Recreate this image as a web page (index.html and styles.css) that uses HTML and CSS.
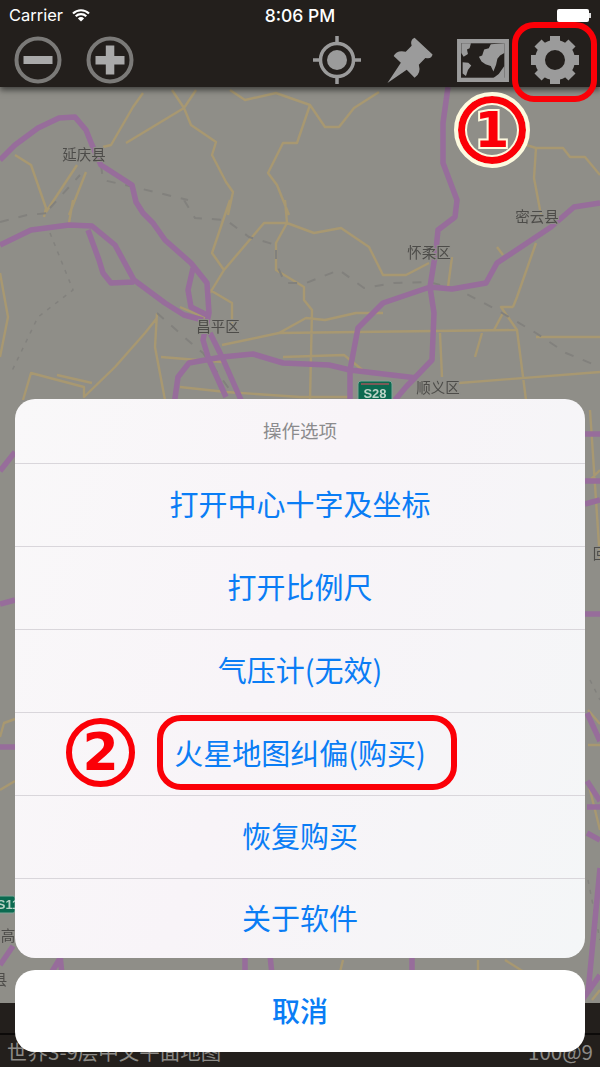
FILE: index.html
```html
<!DOCTYPE html>
<html lang="en">

<head>
    <meta charset="UTF-8" />
    <meta name="viewport" content="width=device-width, initial-scale=1.0" />
    <title>Map settings</title>
    <link rel="stylesheet" href="styles.css">
</head>

<body>
    <div class="screen">
        <div class="topbar">
            <div class="status-row">
                <div class="carrier">
                    <span>Carrier</span>
                    <svg class="wifi" width="18" height="14" viewBox="0 0 18 14">
                        <path d="M1 5.5 A11.5 11.5 0 0 1 17 5.5 M3.7 8.2 A7.7 7.7 0 0 1 14.3 8.2" fill="none" stroke="#fff" stroke-width="2.2" />
                        <path d="M5.9 10.4 A4.4 4.4 0 0 1 12.1 10.4 L9 13.6 Z" fill="#fff" />
                    </svg>
                </div>
                <div class="clock">8:06 PM</div>
                <div class="battery"><div class="battery-body"></div><div class="battery-nub"></div></div>
            </div>
            <div class="tool-row">
                <svg class="tool tool-zoom" width="48" height="48" viewBox="0 0 48 48">
                    <circle cx="24" cy="24" r="21.5" fill="none" stroke="#7b7a78" stroke-width="4" />
                    <rect x="9.5" y="20" width="29" height="8" fill="#a9a9a9" />
                </svg>
                <svg class="tool tool-zoom" width="48" height="48" viewBox="0 0 48 48">
                    <circle cx="24" cy="24" r="21.5" fill="none" stroke="#7b7a78" stroke-width="4" />
                    <rect x="9.5" y="20" width="29" height="8.5" fill="#a9a9a9" />
                    <rect x="19.8" y="9.5" width="8.5" height="29" fill="#a9a9a9" />
                </svg>
                <svg class="tool tool-target" width="50" height="50" viewBox="0 0 50 50">
                    <circle cx="25" cy="25" r="16.5" fill="none" stroke="#9b9b9b" stroke-width="3.5" />
                    <circle cx="25" cy="25" r="10" fill="#9b9b9b" />
                    <path d="M25 1 V9 M25 41 V49 M1 25 H9 M41 25 H49" stroke="#9b9b9b" stroke-width="3.5" />
                </svg>
                <svg class="tool tool-pin" width="48" height="49" viewBox="258 108 146 150">
                    <path d="M345 113 L400 165 Q397 180 378 175 L358 196 Q366 222 345 236 L321 211 L262 252 L303 190 L281 169 Q290 150 318 156 L336 138 Q330 120 345 113 Z" fill="#9b9b9b" />
                </svg>
                <svg class="tool tool-world" width="52" height="43" viewBox="470 118 157 130">
                    <rect x="470" y="118" width="157" height="130" fill="#9b9b9b" />
                    <rect x="482" y="131" width="131" height="104" fill="#231f1c" />
                    <path d="M483 131 H512 L508 146 L500 150 L503 163 L490 172 L483 160 Z M487 188 L504 190 L513 198 L503 212 L497 230 L487 222 Z M536 172 L546 168 L552 150 L566 146 L572 134 L613 131 V160 L600 168 L592 178 L588 196 L580 216 L572 200 L556 194 L544 186 Z M613 200 V236 H580 L596 224 Z" fill="#9b9b9b" />
                </svg>
                <svg class="tool tool-gear" width="50" height="50" viewBox="0 0 50 50">
                    <circle cx="25" cy="25" r="15" fill="none" stroke="#9b9b9b" stroke-width="10" />
                    <g fill="#9b9b9b">
                        <rect x="20" y="1" width="10" height="9" />
                        <rect x="20" y="1" width="10" height="9" transform="rotate(45 25 25)" />
                        <rect x="20" y="1" width="10" height="9" transform="rotate(90 25 25)" />
                        <rect x="20" y="1" width="10" height="9" transform="rotate(135 25 25)" />
                        <rect x="20" y="1" width="10" height="9" transform="rotate(180 25 25)" />
                        <rect x="20" y="1" width="10" height="9" transform="rotate(225 25 25)" />
                        <rect x="20" y="1" width="10" height="9" transform="rotate(270 25 25)" />
                        <rect x="20" y="1" width="10" height="9" transform="rotate(315 25 25)" />
                    </g>
                </svg>
            </div>
        </div>

        <svg class="map" width="600" height="916" viewBox="0 87 600 916">
            <path class="minor" d="M143 93 L133 107 L111 145 L103 147 M126 143 L184 108 L172 90 M184 108 L196 90 M184 108 L191 125 L216 142 L212 155 L226 182 L233 192 L228 215
                M230 90 L245 100 L276 93 L310 105 L325 127 L339 127 L354 108 L379 92 M310 105 L297 143 L283 143 L268 173 L277 185 L289 215
                M526 145 L536 148 L563 148 L570 157 L585 157 L600 175 M536 148 L534 178 L541 215
                M15 155 L31 165 L46 208 L44 217 M77 165 L46 212 M86 172 L69 215 M73 200 L69 223
                M230 200 L212 253 L224 270 L210 293 M224 270 L264 223 L287 223 L314 233 L341 228 L369 247 L383 275 L406 275 L429 263
                M285 200 L287 223 L276 243 L276 270 L304 287 L304 300 L312 310 L310 400
                M279 333 L517 330 L501 307 L513 307 M517 330 L526 400 M494 330 L503 313 M222 345 L279 333 L306 318 L325 320 L356 313 L383 313
                M210 290 L232 303 L232 330 M180 307 L210 320
                M157 313 L155 347 L165 400 M157 318 L145 333 L115 367 L84 397 L84 387 L31 373 L23 400 M57 375 L92 383
                M0 273 L8 317 L0 357 M161 357 L222 362 M283 357 L344 355 L365 372 M180 387 L226 392 L300 397 L350 397
                M459 383 L600 372 M475 357 L482 333 M440 333 L442 377 M536 337 L600 337
                M452 257 L448 287 M497 247 L503 255 M536 243 L517 297 L513 307
                M590 410 L600 560 M590 480 L600 470 M600 724 L588 710 M0 737 L4 723 L15 719 M0 790 L15 781 M588 782 L600 830 M588 745 H600
                M343 960 L340 972 M478 960 V972 M505 960 L524 972 M590 985 L600 975 M592 1000 L600 990" />
            <path class="rail" d="M101 165 L103 180 L138 188 L188 200 M50 208 L80 175 M0 222 L27 215 L50 213
                M184 200 L195 218 L226 220 L249 237 L276 245 L276 263 L285 283 L306 283 L339 270 L364 288 L394 283 L429 282 L459 290 L497 310 L536 333 L566 353 L600 367
                M157 313 L191 343 L203 353 L230 390" />
            <path class="rail-thin" d="M50 233 L73 290 L38 317 L11 373 M590 680 L600 700 M588 880 L600 940" />
            <path class="road" d="M0 160 L15 145 L38 128 L59 118 L75 117 L86 130 L92 145 L101 165 L132 185 L136 202 L143 213 L153 223 L165 240 L191 263 L207 283 L209 313 L203 340 L209 360 L226 397
                M0 245 L31 230 L69 225 L92 226 L115 245 L134 280 L165 303 L184 315 L203 320
                M88 230 L99 260 L103 273 L111 283 L134 282 M193 268 L188 290 L191 307 L207 315
                M174 405 L178 377 L189 363 L222 357 L253 354 L283 363 L329 365 L350 370 L417 378
                M210 333 L222 357 L241 400 M430 287 L383 303 L358 328 L350 370 L350 400
                M430 287 L452 289 L486 283 L497 263 L551 227 L574 207 L600 203
                M448 87 L443 123 L443 163 L457 200 L455 217 L438 230 L436 250 L430 287 L434 313 L432 360 L406 387 L395 400
                M0 471 L15 452 M0 604 L15 600 M0 747 H15 M585 434 H600 M585 481 H600 M585 504 L600 500 M585 614 H600
                M587 713 L600 741 M587 781 L600 801 M587 807 H600 M587 833 L600 840 M600 868 L588 993 M580 1003 L600 975
                M13 946 L0 965 M62 955 L50 975 M60 955 L62 975 M245 955 V975 M270 955 L272 975 M412 955 V975" />
            <g class="sign">
                <rect x="358" y="381" width="34" height="26" rx="3" />
                <path class="sign-line" d="M361 384 H389" />
                <text x="375" y="398">S28</text>
            </g>
            <g class="sign">
                <rect x="-20" y="896" width="35" height="17" rx="2" />
                <text x="8" y="909">S11</text>
            </g>
            <g class="place">
                <text x="84" y="160">延庆县</text>
                <text x="537" y="222">密云县</text>
                <text x="429" y="258">怀柔区</text>
                <text x="218" y="332">昌平区</text>
                <text x="438" y="393">顺义区</text>
                <text x="600" y="559">回</text>
                <text x="8" y="941">高</text>
                <text x="0" y="985">县</text>
            </g>
        </svg>

        <div class="bottombar">
            <div class="bottom-strip"></div>
            <div class="map-info">
                <span>世界3-9层中文平面地图</span>
                <span>100@9</span>
            </div>
        </div>

        <div class="action-sheet">
            <div class="sheet-group">
                <div class="sheet-title">操作选项</div>
                <div class="sheet-row">打开中心十字及坐标</div>
                <div class="sheet-row">打开比例尺</div>
                <div class="sheet-row">气压计(无效)</div>
                <div class="sheet-row">火星地图纠偏(购买)</div>
                <div class="sheet-row">恢复购买</div>
                <div class="sheet-row">关于软件</div>
            </div>
            <div class="sheet-cancel">取消</div>
        </div>

        <!-- red markup on top of the screenshot -->
        <div class="mark-box mark-gear"></div>
        <div class="mark-box mark-row"></div>
        <div class="mark-one"><span>1</span></div>
        <div class="mark-two">2</div>
    </div>
</body>

</html>
```

FILE: styles.css
```css
* {
    box-sizing: border-box;
}

body {
    margin: 0;
    background-color: #221e1b;
    font-family: "Noto Sans CJK SC", sans-serif;
}

.screen {
    position: relative;
    display: flex;
    flex-direction: column;
    width: 600px;
    height: 1067px;
    overflow: hidden;
}

.topbar {
    position: relative;
    z-index: 1;
    height: 87px;
    background-color: #231f1c;
    box-shadow: 0 3px 6px rgba(0, 0, 0, 0.55);
}

.status-row {
    display: grid;
    grid-template-columns: 1fr auto 1fr;
    align-items: center;
    height: 30px;
    padding: 0 9px;
    font-family: Inter, sans-serif;
    font-size: 16.5px;
    color: #fff;
}

.carrier {
    display: flex;
    align-items: center;
    gap: 9px;
}

.clock {
    font-size: 17.5px;
    font-weight: 500;
}

.battery {
    display: flex;
    align-items: center;
    justify-content: flex-end;
}

.battery-body {
    width: 32px;
    height: 13px;
    background-color: #fff;
    border-radius: 2px;
}

.battery-nub {
    width: 2px;
    height: 5px;
    background-color: #ddd;
}

.tool-row {
    display: flex;
    align-items: center;
    height: 60px;
    padding: 0 20px 0 14px;
}

.tool {
    flex: none;
}

.tool-zoom + .tool-zoom {
    margin-left: 24px;
}

.tool-target {
    margin-left: auto;
}

.tool-pin {
    margin-left: 24px;
}

.tool-world {
    margin-left: 23px;
}

.tool-gear {
    margin-left: 21px;
}

.map {
    display: block;
    flex: none;
    background-color: #8f8e88;
    filter: blur(0.6px);
}

.minor {
    fill: none;
    stroke: #a89871;
    stroke-width: 2.4;
    stroke-linejoin: round;
}

.rail {
    fill: none;
    stroke: #82817d;
    stroke-width: 2;
    stroke-dasharray: 9 10;
}

.rail-thin {
    fill: none;
    stroke: #82817d;
    stroke-width: 1.5;
    stroke-dasharray: 4 6;
}

.road {
    fill: none;
    stroke: #976d9b;
    stroke-width: 5.5;
    stroke-linejoin: round;
}

.sign rect {
    fill: #0b6a50;
    stroke: #7fa596;
}

.sign-line {
    stroke: #a0565a;
    stroke-width: 1.5;
}

.sign text {
    fill: #b9d3c6;
    font-family: "Liberation Sans", sans-serif;
    font-size: 13px;
    font-weight: 700;
    text-anchor: middle;
}

.place text {
    fill: #4d4c49;
    font-size: 14.5px;
    text-anchor: middle;
    paint-order: stroke;
    stroke: #8f8e88;
    stroke-width: 2px;
}

.bottombar {
    flex: 1;
    display: flex;
    flex-direction: column;
    background-color: #231f1c;
}

.bottom-strip {
    height: 32px;
    border-bottom: 2px solid #0c0a09;
}

.map-info {
    flex: 1;
    display: flex;
    justify-content: space-between;
    align-items: center;
    padding: 0 7px;
    font-size: 20.5px;
    color: #8d8b87;
}

.action-sheet {
    position: absolute;
    z-index: 2;
    top: 399px;
    left: 15px;
    width: 570px;
    display: flex;
    flex-direction: column;
    gap: 12px;
}

.sheet-group {
    background: linear-gradient(110deg, #f9f8f9, #f8f4f8 45%, #f4f6f7);
    border-radius: 20px;
    overflow: hidden;
}

.sheet-title {
    height: 64px;
    display: flex;
    align-items: center;
    justify-content: center;
    padding-bottom: 2px;
    font-size: 18.5px;
    color: #8b8b8d;
}

.sheet-row {
    height: 83px;
    display: flex;
    align-items: center;
    justify-content: center;
    padding-bottom: 4px;
    border-top: 1.5px solid #d9d6db;
    font-size: 29px;
    color: #0a7df5;
}

.sheet-row:last-child {
    height: 80px;
}

.sheet-cancel {
    height: 82px;
    display: flex;
    align-items: center;
    justify-content: center;
    padding-bottom: 2px;
    background-color: #fff;
    border-radius: 20px;
    font-size: 28px;
    font-weight: 500;
    color: #0a7df5;
}

.mark-box {
    position: absolute;
    z-index: 3;
    border: 6px solid #fb0007;
}

.mark-gear {
    top: 22px;
    left: 512px;
    width: 85px;
    height: 80px;
    border-radius: 22px;
}

.mark-row {
    top: 715px;
    left: 157px;
    width: 300px;
    height: 75px;
    border-radius: 24px;
}

.mark-one {
    position: absolute;
    z-index: 3;
    top: 92px;
    left: 454px;
    width: 76px;
    height: 76px;
    display: flex;
    align-items: center;
    justify-content: center;
    background-color: #8f8e88;
    border: 4px solid #fdfadf;
    border-radius: 50%;
    box-shadow: inset 0 0 0 7px #fb0007, inset 0 0 0 9px #fdfadf;
    font-family: "DejaVu Sans", sans-serif;
    font-size: 50px;
    font-weight: 700;
    color: #fb0007;
}

.mark-one span {
    -webkit-text-stroke: 4px #fdfadf;
    paint-order: stroke fill;
    line-height: 1;
}

.mark-two {
    position: absolute;
    z-index: 3;
    top: 718px;
    left: 66px;
    width: 69px;
    height: 69px;
    display: flex;
    align-items: center;
    justify-content: center;
    padding-bottom: 2px;
    border: 6px solid #fb0007;
    border-radius: 50%;
    font-family: "DejaVu Sans", sans-serif;
    font-size: 52px;
    font-weight: 700;
    color: #fb0007;
}
```
